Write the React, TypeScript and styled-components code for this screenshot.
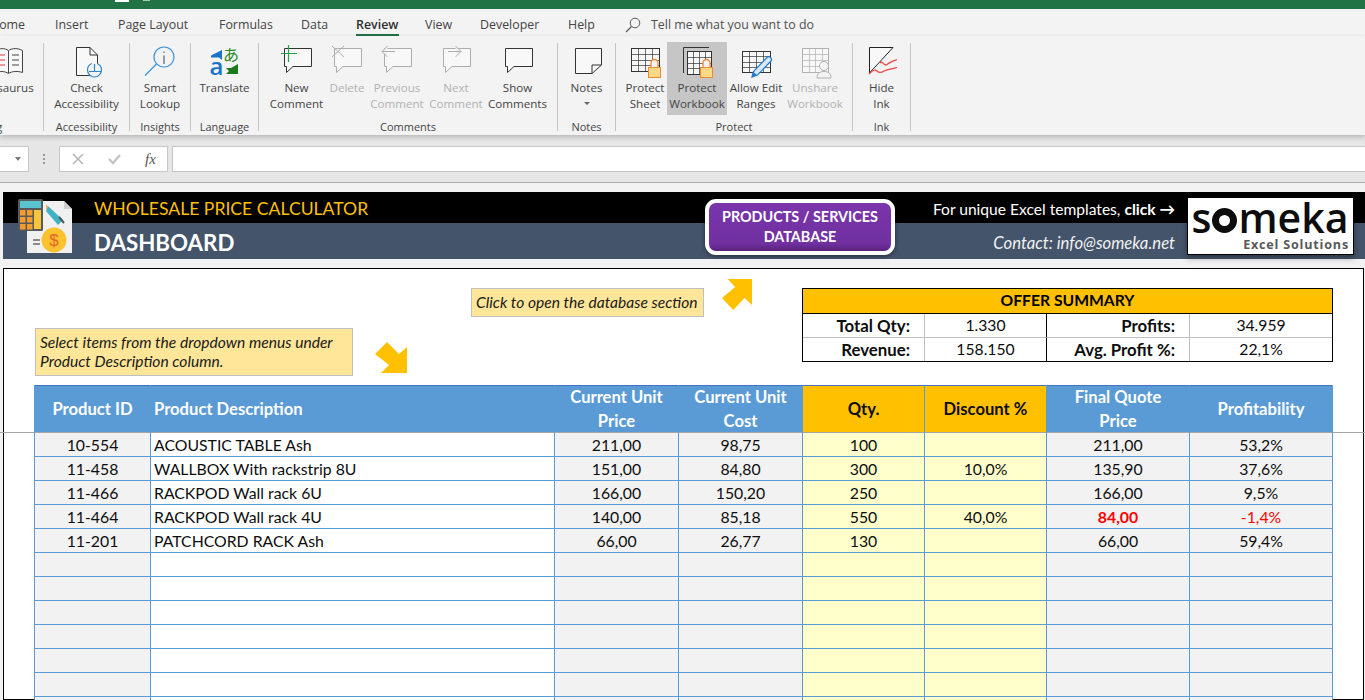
import React from 'react';
import styled, { createGlobalStyle } from 'styled-components';

const GlobalStyle = createGlobalStyle`
  html, body {
    margin: 0;
    padding: 0;
    height: 700px;
    overflow: hidden;
    background: #f2f2f2;
  }
`;

const uiFont = `'Open Sans', 'Noto Sans', sans-serif`;
const cellFont = `Lato, 'Liberation Sans', sans-serif`;

/* ---------- window chrome ---------- */

const Page = styled.div`
  width: 1365px;
  height: 700px;
  overflow: hidden;
`;

const TitleBar = styled.div`
  height: 9px;
  background: #217346;
  display: flex;
  align-items: flex-start;
  padding-left: 115px;
  gap: 14px;
`;

const TitleMark = styled.span<{ $w: number; $dim?: boolean }>`
  width: ${p => p.$w}px;
  height: ${p => (p.$dim ? 1 : 2)}px;
  background: ${p => (p.$dim ? '#a9c9b6' : '#ffffff')};
`;

const TabBar = styled.div`
  height: 27px;
  background: #f3f3f3;
  display: flex;
  align-items: flex-start;
  margin-left: -10px;
  font: 12.4px/32px ${uiFont};
  color: #444444;
`;

const Tab = styled.div<{ $w: number; $active?: boolean }>`
  width: ${p => p.$w}px;
  height: 27px;
  flex: none;
  white-space: nowrap;
  position: relative;
  color: ${p => (p.$active ? '#2f2f2f' : '#444444')};
  font-weight: ${p => (p.$active ? 600 : 400)};

  &::after {
    content: '';
    display: ${p => (p.$active ? 'block' : 'none')};
    position: absolute;
    left: 0;
    top: 25px;
    width: 43px;
    height: 2px;
    background: #217346;
  }
`;

const TellMe = styled.div`
  display: flex;
  align-items: center;
  gap: 10px;
  height: 31px;
  margin-left: 28px;
  color: #505050;
  svg {
    flex: none;
  }
`;

const Ribbon = styled.div`
  height: 99px;
  background: #f3f3f3;
  display: flex;
  align-items: flex-start;
  box-shadow: 0 2px 5px rgba(0, 0, 0, 0.22);
  position: relative;
  z-index: 2;
`;

const Group = styled.div<{ $w: number; $ml?: number }>`
  width: ${p => p.$w}px;
  flex: none;
  margin-left: ${p => p.$ml ?? 0}px;
  margin-top: 7px;
  height: 88px;
  border-right: 1px solid #c6c6c6;
  display: flex;
  flex-direction: column;
  box-sizing: content-box;
`;

const GroupButtons = styled.div<{ $end?: boolean }>`
  display: flex;
  height: 73px;
  margin-top: -1px;
  justify-content: ${p => (p.$end ? 'flex-end' : 'center')};
`;

const GroupLabel = styled.div`
  margin-top: 5px;
  text-align: center;
  font: 11px/14px ${uiFont};
  color: #444444;
  white-space: nowrap;
`;

const RibbonButton = styled.div<{ $w: number; $off?: boolean; $on?: boolean }>`
  width: ${p => p.$w}px;
  flex: none;
  height: 73px;
  display: flex;
  flex-direction: column;
  align-items: center;
  background: ${p => (p.$on ? '#c6c6c6' : 'transparent')};
  color: ${p => (p.$off ? '#b1b1b1' : '#444444')};
  font: 11.6px/16px ${uiFont};
  text-align: center;
  white-space: nowrap;
  svg {
    flex: none;
    display: block;
  }
`;

const Caret = styled.div`
  width: 0;
  height: 0;
  margin: 6px auto 0;
  border: 3px solid transparent;
  border-top: 3px solid #666666;
  border-bottom: 0;
`;

const FormulaArea = styled.div`
  height: 36px;
  background: #e6e6e6;
  border-bottom: 1px solid #ababab;
  display: flex;
  align-items: flex-start;
  padding-top: 11px;
  box-sizing: content-box;
`;

const NameBox = styled.div`
  width: 21px;
  height: 24px;
  background: #ffffff;
  border: 1px solid #c6c6c6;
  border-left: 0;
  display: flex;
  align-items: center;
  justify-content: flex-end;
  padding-right: 7px;
  box-sizing: content-box;
`;

const NameCaret = styled.div`
  width: 0;
  height: 0;
  border: 3.5px solid transparent;
  border-top: 4px solid #7a7a7a;
  border-bottom: 0;
`;

const Grip = styled.div`
  width: 30px;
  height: 26px;
  display: flex;
  flex-direction: column;
  align-items: center;
  justify-content: center;
  gap: 2px;
  span {
    width: 2px;
    height: 2px;
    background: #9a9a9a;
  }
`;

const FxBox = styled.div`
  width: 95px;
  height: 24px;
  background: #ffffff;
  border: 1px solid #c6c6c6;
  display: flex;
  align-items: center;
  padding-left: 12px;
  gap: 24px;
  box-sizing: content-box;
`;

const FxLabel = styled.span`
  font: italic 15px/24px 'Liberation Serif', serif;
  color: #555555;
`;

const FormulaInput = styled.div`
  flex: 1;
  height: 24px;
  margin-left: 4px;
  background: #ffffff;
  border: 1px solid #c6c6c6;
  border-right: 0;
`;

/* ---------- worksheet ---------- */

const Workspace = styled.div`
  padding-top: 9px;
  padding-left: 3px;
  position: relative;
  font-family: ${cellFont};
`;

const Banner = styled.div`
  height: 67px;
  display: flex;
  align-items: flex-start;
  background: linear-gradient(#000000 31px, #44546a 31px);
  color: #ffffff;
`;

const BannerIcon = styled.div`
  margin: 6px 0 0 14px;
  width: 57px;
  height: 56px;
  flex: none;
`;

const TitleColumn = styled.div`
  margin-left: 20px;
  width: 611px;
  flex: none;
`;

const AppTitle = styled.div`
  font-size: 17.6px;
  line-height: 33px;
  color: #ffc000;
  white-space: nowrap;
`;

const SheetTitle = styled.div`
  font-size: 22.3px;
  line-height: 36px;
  font-weight: 700;
  white-space: nowrap;
`;

const DatabaseButton = styled.div`
  margin-top: 7px;
  width: 190px;
  height: 56px;
  box-sizing: border-box;
  flex: none;
  border: 4px solid #ffffff;
  border-radius: 11px;
  background: linear-gradient(#7a35ab 0%, #7030a0 85%, #562279 100%);
  box-shadow: 0 1px 4px rgba(0, 0, 0, 0.5);
  font-size: 14.4px;
  line-height: 20px;
  font-weight: 700;
  text-align: center;
  display: flex;
  align-items: center;
  justify-content: center;
`;

const ContactColumn = styled.div`
  width: 280px;
  flex: none;
  text-align: right;
  white-space: nowrap;
`;

const TemplatesLine = styled.div`
  font-size: 15.6px;
  line-height: 35px;
  b {
    font-weight: 700;
  }
`;

const ContactLine = styled.div`
  font-size: 16.7px;
  line-height: 33px;
  font-style: italic;
  color: #f2f2f2;
`;

const SomekaLogo = styled.div`
  margin: 5px 0 0 12px;
  width: 167px;
  height: 58px;
  box-sizing: border-box;
  flex: none;
  background: #ffffff;
  border: 1px solid #000000;
  box-shadow: 0 3px 6px rgba(0, 0, 0, 0.35);
  color: #0d0d0d;
  display: flex;
  flex-direction: column;
  align-items: flex-end;
  padding: 0 4px 0 3px;
  overflow: hidden;
`;

const SomekaWord = styled.div`
  display: flex;
  align-items: center;
  align-self: center;
  font: 600 41px/39px 'Open Sans', sans-serif;
  height: 39px;
  svg {
    margin: 6px 1px 0 1px;
  }
`;

const SomekaTag = styled.div`
  font: 700 12.6px/15px 'Open Sans', sans-serif;
  letter-spacing: 0.8px;
  color: #595959;
`;

const Sheet = styled.div`
  margin-top: 9px;
  width: 1361px;
  height: 432px;
  box-sizing: border-box;
  border: 1px solid #000000;
  background: #ffffff;
  padding-left: 30px;
  position: relative;
  color: #0d0d0d;
`;

const FreezeLine = styled.div`
  position: absolute;
  left: -4px;
  top: 163px;
  width: 1365px;
  height: 1px;
  background: #a6a6a6;
`;

const TopArea = styled.div`
  height: 116px;
  display: flex;
  align-items: flex-start;
`;

const Note = styled.div<{ $w: number; $h: number; $ml: number; $mt: number }>`
  width: ${p => p.$w}px;
  height: ${p => p.$h}px;
  margin: ${p => p.$mt}px 0 0 ${p => p.$ml}px;
  flex: none;
  box-sizing: border-box;
  background: #ffe699;
  border: 1px solid #bfbfbf;
  padding: 0 4px;
  display: flex;
  align-items: center;
  font-size: 15.6px;
  line-height: 19px;
  font-style: italic;
  color: #1a1a1a;
  white-space: nowrap;
`;

const ArrowMark = styled.svg<{ $ml: number; $mt: number; $up?: boolean }>`
  flex: none;
  margin: ${p => p.$mt}px 0 0 ${p => p.$ml}px;
  transform: ${p => (p.$up ? 'scaleY(-1)' : 'none')};
`;

const Summary = styled.div`
  margin: 19px 0 0 50px;
  width: 531px;
  flex: none;
  box-sizing: border-box;
  border: 1px solid #000000;
  display: grid;
  grid-template-columns: 122px 122px 143px 142px;
  grid-template-rows: 25px 24px 23px;
  font-size: 15.7px;
`;

const SummaryHead = styled.div`
  grid-column: 1 / -1;
  background: #ffc000;
  border-bottom: 1px solid #000000;
  text-align: center;
  font-weight: 700;
  font-size: 15.7px;
  line-height: 23px;
  color: #000000;
`;

const SummaryCell = styled.div<{ $label?: boolean; $split?: boolean; $last?: boolean; $top?: boolean }>`
  text-align: ${p => (p.$label ? 'right' : 'center')};
  font-weight: ${p => (p.$label ? 700 : 400)};
  font-size: ${p => (p.$label ? '16.8px' : '15.7px')};
  padding-right: ${p => (p.$label ? '14px' : '0')};
  line-height: 23px;
  border-right: ${p => (p.$last ? '0' : p.$split ? '1px solid #000000' : '1px solid #bfbfbf')};
  border-bottom: ${p => (p.$top ? '1px solid #bfbfbf' : '0')};
`;

const PriceTable = styled.table`
  position: relative;
  table-layout: fixed;
  width: 1299px;
  border-collapse: separate;
  border-spacing: 0;
  font-size: 15.8px;
`;

const HeadCell = styled.th<{ $orange?: boolean; $left?: boolean }>`
  height: 48px;
  padding: 0;
  box-sizing: border-box;
  background: ${p => (p.$orange ? '#ffc000' : '#5b9bd5')};
  color: ${p => (p.$orange ? '#0d0d0d' : '#ffffff')};
  box-shadow: inset 0 1px #4472c4, inset 0 -1px #a6a6a6;
  border-right: 1px solid ${p => (p.$orange ? '#5b9bd5' : 'transparent')};
  text-align: ${p => (p.$left ? 'left' : 'center')};
  padding-left: ${p => (p.$left ? '3px' : '0')};
  font-size: 16.6px;
  font-weight: 700;
  line-height: 24px;
  white-space: nowrap;
  &:first-child {
    border-left: 1px solid #5b9bd5;
  }
`;

const Cell = styled.td<{ $bg: string; $left?: boolean; $red?: boolean; $bold?: boolean }>`
  height: 24px;
  padding: 0 ${p => (p.$left ? '3px' : '0')};
  box-sizing: border-box;
  background: ${p => p.$bg};
  border-right: 1px solid #5b9bd5;
  border-bottom: 1px solid #5b9bd5;
  text-align: ${p => (p.$left ? 'left' : 'center')};
  color: ${p => (p.$red ? '#ff0000' : '#0d0d0d')};
  font-weight: ${p => (p.$bold ? 700 : 400)};
  line-height: 23px;
  white-space: nowrap;
  &:first-child {
    border-left: 1px solid #5b9bd5;
  }
`;

/* ---------- drawings ---------- */

const Svg = ({ children }: { children: React.ReactNode }) => (
  <svg width="44" height="38" viewBox="0 0 44 38" fill="none">
    {children}
  </svg>
);

const Bubble = ({ c }: { c: string }) => (
  <path d="M9.5 6.5H36.5V24.5H18L11.5 30.5V24.5H9.5Z" stroke={c} strokeWidth="1" fill="#f8f8f8" />
);

const Grid = ({ x, y, w, h, c }: { x: number; y: number; w: number; h: number; c: string }) => {
  const cols = [1, 2, 3].map(i => x + Math.round((w * i) / 4) + 0.5);
  const rows = [1, 2, 3].map(i => y + Math.round((h * i) / 4) + 0.5);
  return (
    <g stroke={c} strokeWidth="1">
      <rect x={x + 0.5} y={y + 0.5} width={w} height={h} fill="#f8f8f8" />
      {cols.map(v => (
        <path key={v} d={`M${v} ${y}V${y + h}`} opacity="0.7" />
      ))}
      {rows.map(v => (
        <path key={v} d={`M${x} ${v}H${x + w}`} opacity="0.7" />
      ))}
    </g>
  );
};

const Lock = ({ x }: { x: number }) => (
  <g>
    <path d={`M${x + 3} 25V21a3.5 3.5 0 0 1 7 0V25`} stroke="#f0892d" strokeWidth="1.3" fill="#f3f3f3" />
    <rect x={x + 0.5} y="25.5" width="12" height="10" fill="#fcd987" stroke="#f0892d" />
  </g>
);

const ThesaurusIcon = () => (
  <Svg>
    <path d="M24.5 8.5C21 6 15 6 12 8.5V30.5C15 29 21 29 24.5 31.5C28 29 34 29 38.5 30.5V8.5C34 6 28 6 24.5 8.5Z" stroke="#444" fill="#f8f8f8" />
    <path d="M24.5 9V31" stroke="#444" />
    <path d="M28 13H35M28 18H35M28 23H35" stroke="#444" />
    <path d="M15 13H21M15 18H21M15 23H21" stroke="#e0393e" />
  </Svg>
);

const AccessibilityIcon = () => (
  <Svg>
    <path d="M11.5 5.5H25L32.5 13V33.5H11.5Z" stroke="#333" fill="#f8f8f8" />
    <path d="M25 5.5V13H32.5" stroke="#333" />
    <circle cx="29.5" cy="28" r="7" stroke="#2f86d0" strokeWidth="1.2" fill="#f3f3f3" strokeDasharray="30 6" />
    <path d="M29.5 22V29M24 29.5H36" stroke="#2f86d0" strokeWidth="1.2" />
  </Svg>
);

const LookupIcon = () => (
  <Svg>
    <circle cx="26" cy="15" r="10" stroke="#3a92d8" strokeWidth="1.2" />
    <path d="M18.5 22L7 33.5" stroke="#3a92d8" strokeWidth="1.3" />
    <path d="M26 13.5V22M26 9.5V11" stroke="#444" />
  </Svg>
);

const TranslateIcon = () => (
  <Svg>
    <path d="M8 13.5L19 8V18L16 15.5H8Z" fill="#1a73c9" />
    <text x="6.5" y="33" fontFamily="'Open Sans', sans-serif" fontSize="24" fontWeight="600" fill="#1a73c9">a</text>
    <text x="20" y="19" fontFamily="'Noto Sans CJK JP', sans-serif" fontSize="16" fill="#2a8a24">あ</text>
    <path d="M35 32H23L26 29L23 26H28L35 22Z" fill="#1c7a1c" />
  </Svg>
);

const NewCommentIcon = () => (
  <Svg>
    <Bubble c="#333" />
    <path d="M6 11.5H22M13.5 3V20" stroke="#22a146" strokeWidth="1.2" />
  </Svg>
);

const DeleteIcon = () => (
  <Svg>
    <Bubble c="#adadad" />
    <path d="M7 4L19 15M19 4L7 15" stroke="#adadad" />
  </Svg>
);

const PreviousIcon = () => (
  <Svg>
    <Bubble c="#adadad" />
    <path d="M20 9.5H7M12.5 4L7 9.5L12.5 15" stroke="#adadad" fill="#f3f3f3" />
  </Svg>
);

const NextIcon = () => (
  <Svg>
    <Bubble c="#adadad" />
    <path d="M14 9.5H27M21.5 4L27 9.5L21.5 15" stroke="#adadad" fill="#f3f3f3" />
  </Svg>
);

const ShowIcon = () => (
  <Svg>
    <Bubble c="#333" />
  </Svg>
);

const NotesIcon = () => (
  <Svg>
    <path d="M10.5 6.5H36.5V23L27 31.5H10.5Z" stroke="#333" fill="#f8f8f8" />
    <path d="M36.5 23H27V31.5" stroke="#333" />
  </Svg>
);

const ProtectSheetIcon = () => (
  <Svg>
    <Grid x={8} y={6} w={28} h={23} c="#333" />
    <Lock x={25} />
  </Svg>
);

const ProtectBookIcon = () => (
  <Svg>
    <path d="M8.5 31V5.5H34" stroke="#333" />
    <Grid x={12} y={9} w={24} h={23} c="#333" />
    <Lock x={25} />
  </Svg>
);

const AllowEditIcon = () => (
  <Svg>
    <Grid x={8} y={9} w={28} h={21} c="#333" />
    <path d="M18 35L19.5 29.5L33 15.5C35 13.5 39 16.5 37 19L23.5 33Z" fill="#dbe9f6" stroke="#1f78c8" strokeWidth="1.2" />
    <path d="M18 35L19.5 30L23 33Z" fill="#1f78c8" />
  </Svg>
);

const UnshareIcon = () => (
  <Svg>
    <Grid x={9} y={6} w={26} h={24} c="#b1b1b1" />
    <circle cx="31" cy="24" r="4.5" stroke="#b1b1b1" fill="#f3f3f3" />
    <path d="M24 36C24 31 27 29.5 31 29.5C35 29.5 38 31 38 36Z" stroke="#b1b1b1" fill="#f3f3f3" />
  </Svg>
);

const HideInkIcon = () => (
  <Svg>
    <path d="M9.5 5.5H33L9.5 31Z" stroke="#222" fill="#f8f8f8" />
    <path d="M20 21C23 18 24 25 27 22.5C30 20 32 19.5 37 17.5" stroke="#ef4444" strokeWidth="1.3" />
    <path d="M9 32C13 28 15 27 17 29C19 31 21 31 24 29C28 27 32 27 37 25.5" stroke="#ef4444" strokeWidth="1.3" />
  </Svg>
);

const SearchGlyph = () => (
  <svg width="16" height="16" viewBox="0 0 16 16" fill="none" stroke="#5a5a5a">
    <circle cx="10" cy="6" r="4.8" />
    <path d="M6.5 9.5L1 15" strokeWidth="1.2" />
  </svg>
);

const CancelGlyph = () => (
  <svg width="12" height="12" viewBox="0 0 12 12" fill="none" stroke="#b5b5b5" strokeWidth="1.5">
    <path d="M1 1L11 11M11 1L1 11" />
  </svg>
);

const CheckGlyph = () => (
  <svg width="13" height="12" viewBox="0 0 13 12" fill="none" stroke="#c4c4c4" strokeWidth="2.4">
    <path d="M1 6L5 10L12 2" />
  </svg>
);

const CalculatorArt = () => (
  <svg width="57" height="56" viewBox="0 0 57 56">
    <path d="M10 3H47L55 11V55H10Z" fill="#f0f0f0" />
    <path d="M47 3V11H55Z" fill="#cfcfcf" />
    <rect x="1" y="1" width="25" height="32" rx="1.5" fill="#595959" />
    <rect x="3" y="3" width="21" height="7" fill="#59c3cf" />
    {[0, 1, 2].map(r =>
      [0, 1].map(c => <rect key={`${r}${c}`} x={3 + c * 7} y={12 + r * 7} width="5.5" height="5.5" fill="#f39c2f" />)
    )}
    <rect x="17" y="12" width="7" height="19" fill="#f5c53d" />
    <path d="M31 8L46 22L41 27L29 13Z" fill="#3fb3c6" />
    <path d="M31 8L29 7L29.5 13Z" fill="#f0a040" />
    <path d="M42 19L47 25" stroke="#555" strokeWidth="2" />
    <path d="M16 42H23M16 46H23" stroke="#8a8a8a" strokeWidth="2" />
    <circle cx="37" cy="42" r="12.5" fill="#f9c22e" />
    <text x="37" y="48" textAnchor="middle" fontFamily="'Liberation Sans', sans-serif" fontSize="17" fill="#e8622c">$</text>
  </svg>
);

const LogoRing = () => (
  <svg width="25" height="25" viewBox="0 0 25 25">
    <circle cx="12.5" cy="12.5" r="9" fill="none" stroke="#0d0d0d" strokeWidth="7" />
    <path d="M9.5 14V16M12.5 11V16M15.5 9V16" stroke="#ffffff" strokeWidth="1.4" />
  </svg>
);

const BlockArrow = ({ w, ...props }: { w: number; $ml: number; $mt: number; $up?: boolean }) => (
  <ArrowMark width={w} height="31" viewBox="0 0 32 31" preserveAspectRatio="none" {...props}>
    <path d="M12 0L24 12L32 5V31H6L14 23L0 12Z" fill="#ffc000" />
  </ArrowMark>
);

/* ---------- data ---------- */

const tabs: [string, number][] = [
  ['Home', 65],
  ['Insert', 63],
  ['Page Layout', 101],
  ['Formulas', 82],
  ['Data', 55],
  ['Review', 69],
  ['View', 55],
  ['Developer', 88],
  ['Help', 29],
];

const columns = [117, 404, 124, 124, 122, 122, 143, 143];

const products = [
  ['10-554', 'ACOUSTIC TABLE Ash', '211,00', '98,75', '100', '', '211,00', '53,2%'],
  ['11-458', 'WALLBOX With rackstrip 8U', '151,00', '84,80', '300', '10,0%', '135,90', '37,6%'],
  ['11-466', 'RACKPOD Wall rack 6U', '166,00', '150,20', '250', '', '166,00', '9,5%'],
  ['11-464', 'RACKPOD Wall rack 4U', '140,00', '85,18', '550', '40,0%', '84,00', '-1,4%'],
  ['11-201', 'PATCHCORD RACK Ash', '66,00', '26,77', '130', '', '66,00', '59,4%'],
  ...Array.from({ length: 7 }, () => ['', '', '', '', '', '', '', '']),
];

const cellFill = (col: number) => {
  if (col === 1) return '#ffffff';
  if (col === 4 || col === 5) return '#ffffcc';
  return '#f2f2f2';
};

export default function App() {
  return (
    <Page>
      <GlobalStyle />
      <TitleBar>
        <TitleMark $w={14} />
        <TitleMark $w={7} $dim />
      </TitleBar>
      <TabBar>
        {tabs.map(([name, w]) => (
          <Tab key={name} $w={w} $active={name === 'Review'}>
            {name}
          </Tab>
        ))}
        <TellMe>
          <SearchGlyph />
          Tell me what you want to do
        </TellMe>
      </TabBar>
      <Ribbon>
        <Group $w={125} $ml={-82}>
          <GroupButtons $end>
            <RibbonButton $w={73}>
              <ThesaurusIcon />
              <div>Thesaurus</div>
            </RibbonButton>
            <RibbonButton $w={1} />
          </GroupButtons>
          <GroupLabel>Proofing</GroupLabel>
        </Group>
        <Group $w={85}>
          <GroupButtons>
            <RibbonButton $w={85}>
              <AccessibilityIcon />
              <div>Check<br />Accessibility</div>
            </RibbonButton>
          </GroupButtons>
          <GroupLabel>Accessibility</GroupLabel>
        </Group>
        <Group $w={60}>
          <GroupButtons>
            <RibbonButton $w={60}>
              <LookupIcon />
              <div>Smart<br />Lookup</div>
            </RibbonButton>
          </GroupButtons>
          <GroupLabel>Insights</GroupLabel>
        </Group>
        <Group $w={67}>
          <GroupButtons>
            <RibbonButton $w={67}>
              <TranslateIcon />
              <div>Translate</div>
            </RibbonButton>
          </GroupButtons>
          <GroupLabel>Language</GroupLabel>
        </Group>
        <Group $w={298}>
          <GroupButtons>
            <RibbonButton $w={61}>
              <NewCommentIcon />
              <div>New<br />Comment</div>
            </RibbonButton>
            <RibbonButton $w={40} $off>
              <DeleteIcon />
              <div>Delete</div>
            </RibbonButton>
            <RibbonButton $w={60} $off>
              <PreviousIcon />
              <div>Previous<br />Comment</div>
            </RibbonButton>
            <RibbonButton $w={58} $off>
              <NextIcon />
              <div>Next<br />Comment</div>
            </RibbonButton>
            <RibbonButton $w={65}>
              <ShowIcon />
              <div>Show<br />Comments</div>
            </RibbonButton>
          </GroupButtons>
          <GroupLabel>Comments</GroupLabel>
        </Group>
        <Group $w={57}>
          <GroupButtons>
            <RibbonButton $w={57}>
              <NotesIcon />
              <div>Notes<Caret /></div>
            </RibbonButton>
          </GroupButtons>
          <GroupLabel>Notes</GroupLabel>
        </Group>
        <Group $w={236}>
          <GroupButtons>
            <RibbonButton $w={44}>
              <ProtectSheetIcon />
              <div>Protect<br />Sheet</div>
            </RibbonButton>
            <RibbonButton $w={60} $on>
              <ProtectBookIcon />
              <div>Protect<br />Workbook</div>
            </RibbonButton>
            <RibbonButton $w={58}>
              <AllowEditIcon />
              <div>Allow Edit<br />Ranges</div>
            </RibbonButton>
            <RibbonButton $w={60} $off>
              <UnshareIcon />
              <div>Unshare<br />Workbook</div>
            </RibbonButton>
          </GroupButtons>
          <GroupLabel>Protect</GroupLabel>
        </Group>
        <Group $w={57}>
          <GroupButtons>
            <RibbonButton $w={57}>
              <HideInkIcon />
              <div>Hide<br />Ink</div>
            </RibbonButton>
          </GroupButtons>
          <GroupLabel>Ink</GroupLabel>
        </Group>
      </Ribbon>
      <FormulaArea>
        <NameBox>
          <NameCaret />
        </NameBox>
        <Grip>
          <span />
          <span />
          <span />
        </Grip>
        <FxBox>
          <CancelGlyph />
          <CheckGlyph />
          <FxLabel>fx</FxLabel>
        </FxBox>
        <FormulaInput />
      </FormulaArea>
      <Workspace>
        <Banner>
          <BannerIcon>
            <CalculatorArt />
          </BannerIcon>
          <TitleColumn>
            <AppTitle>WHOLESALE PRICE CALCULATOR</AppTitle>
            <SheetTitle>DASHBOARD</SheetTitle>
          </TitleColumn>
          <DatabaseButton>
            <div>
              PRODUCTS / SERVICES
              <br />
              DATABASE
            </div>
          </DatabaseButton>
          <ContactColumn>
            <TemplatesLine>
              For unique Excel templates, <b>click →</b>
            </TemplatesLine>
            <ContactLine>Contact: info@someka.net</ContactLine>
          </ContactColumn>
          <SomekaLogo>
            <SomekaWord>
              s
              <LogoRing />
              meka
            </SomekaWord>
            <SomekaTag>Excel Solutions</SomekaTag>
          </SomekaLogo>
        </Banner>
        <Sheet>
          <FreezeLine />
          <TopArea>
            <Note $w={318} $h={48} $ml={1} $mt={59}>
              <div>
                Select items from the dropdown menus under
                <br />
                Product Description column.
              </div>
            </Note>
            <BlockArrow w={32} $ml={22} $mt={73} />
            <Note $w={233} $h={29} $ml={64} $mt={19}>
              Click to open the database section
            </Note>
            <BlockArrow w={30} $ml={18} $mt={10} $up />
            <Summary>
              <SummaryHead>OFFER SUMMARY</SummaryHead>
              <SummaryCell $label $top>Total Qty:</SummaryCell>
              <SummaryCell $split $top>1.330</SummaryCell>
              <SummaryCell $label $top>Profits:</SummaryCell>
              <SummaryCell $last $top>34.959</SummaryCell>
              <SummaryCell $label>Revenue:</SummaryCell>
              <SummaryCell $split>158.150</SummaryCell>
              <SummaryCell $label>Avg. Profit %:</SummaryCell>
              <SummaryCell $last>22,1%</SummaryCell>
            </Summary>
          </TopArea>
          <PriceTable>
            <colgroup>
              {columns.map((w, i) => (
                <col key={i} width={w} />
              ))}
            </colgroup>
            <thead>
              <tr>
                <HeadCell>Product ID</HeadCell>
                <HeadCell $left>Product Description</HeadCell>
                <HeadCell>Current Unit<br />Price</HeadCell>
                <HeadCell>Current Unit<br />Cost</HeadCell>
                <HeadCell $orange>Qty.</HeadCell>
                <HeadCell $orange>Discount %</HeadCell>
                <HeadCell>Final Quote<br />Price</HeadCell>
                <HeadCell>Profitability</HeadCell>
              </tr>
            </thead>
            <tbody>
              {products.map((row, r) => (
                <tr key={r}>
                  {row.map((value, c) => (
                    <Cell
                      key={c}
                      $bg={cellFill(c)}
                      $left={c === 1}
                      $red={value === '-1,4%' || (r === 3 && c === 6)}
                      $bold={r === 3 && c === 6}
                    >
                      {value}
                    </Cell>
                  ))}
                </tr>
              ))}
            </tbody>
          </PriceTable>
        </Sheet>
      </Workspace>
    </Page>
  );
}
